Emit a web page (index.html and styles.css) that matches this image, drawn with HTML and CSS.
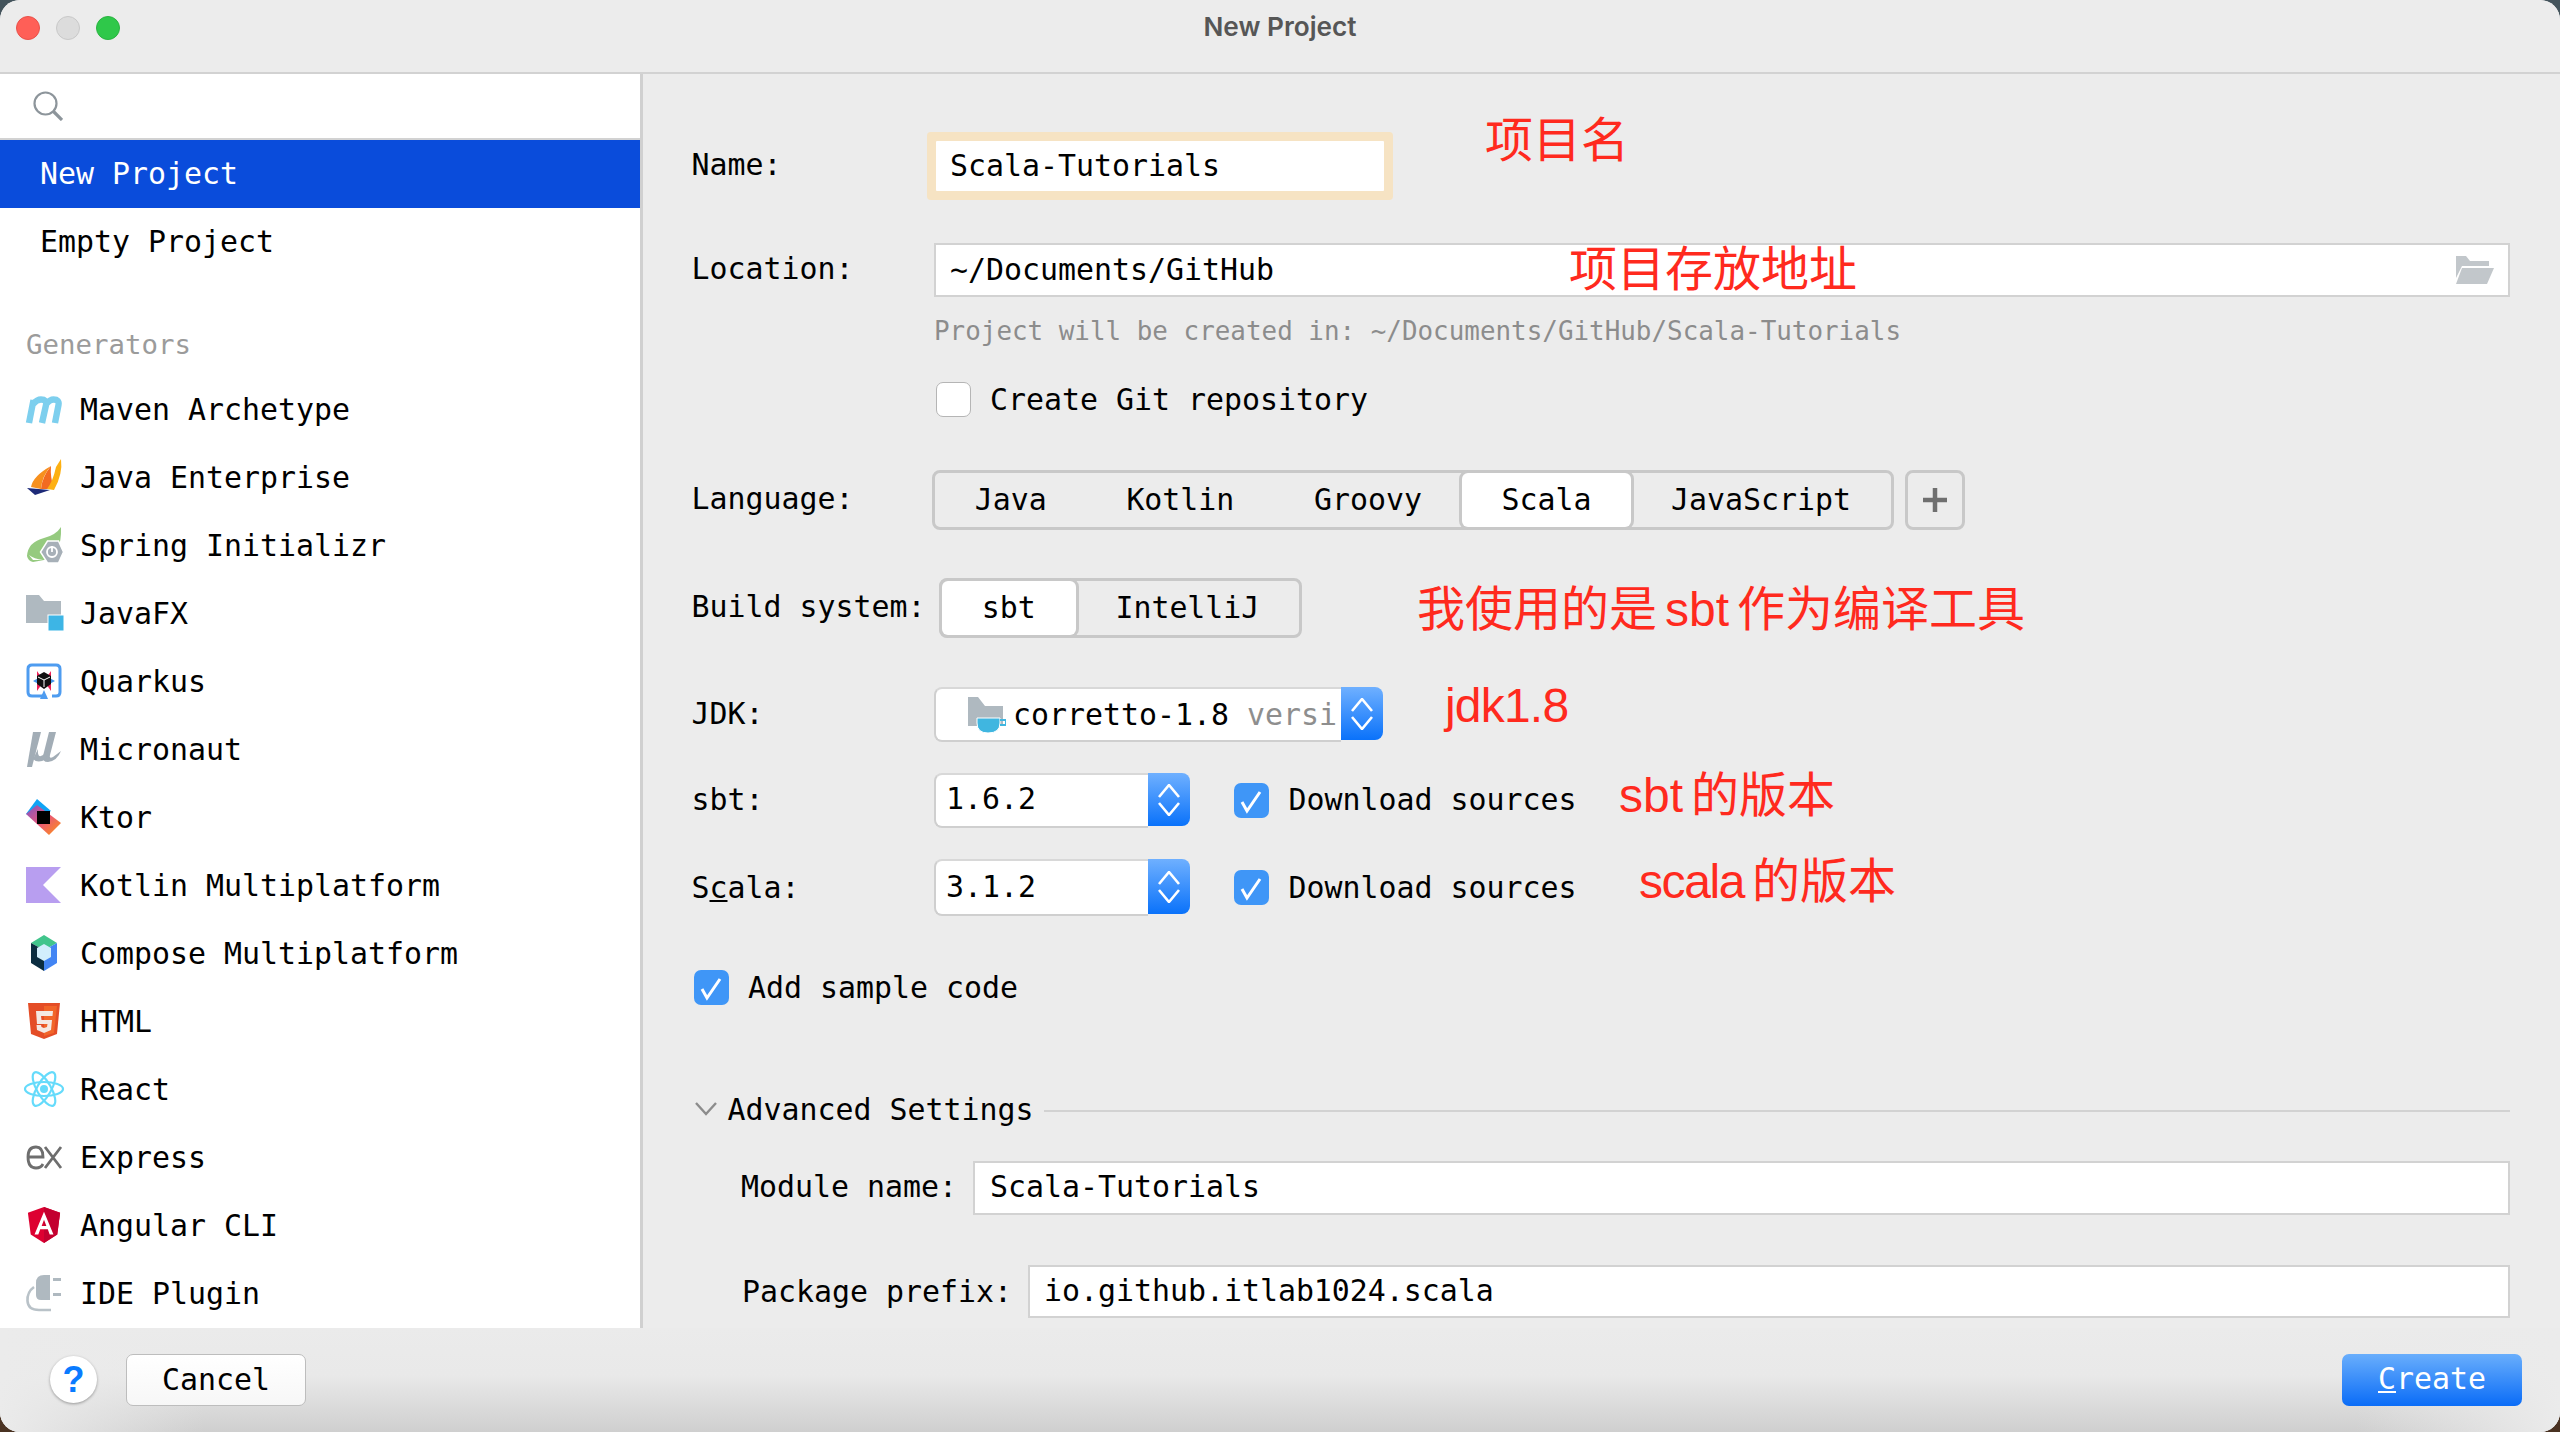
FILE: index.html
```html
<!DOCTYPE html>
<html lang="en">
<head>
<meta charset="utf-8">
<title>New Project</title>
<link rel="stylesheet" href="styles.css">
</head>
<body>
<div class="window">
  <header class="titlebar">
    <div class="lights">
      <span class="light light-red"></span>
      <span class="light light-grey"></span>
      <span class="light light-green"></span>
    </div>
    <h1 class="title">New Project</h1>
  </header>

  <main class="content">
    <aside class="sidebar">
      <div class="search">
        <svg class="search-icon" viewBox="0 0 30 30"><circle cx="12.5" cy="12.5" r="11" fill="none" stroke="#8d959b" stroke-width="2.2"/><path d="M20.5 20.5 L29 29" stroke="#8d959b" stroke-width="3.2" fill="none"/></svg>
      </div>
      <div class="top-item selected">New Project</div>
      <div class="top-item">Empty Project</div>
      <div class="group-title">Generators</div>

      <div class="gen"><svg class="ico" viewBox="0 0 36 36"><path d="M3 32 L7.5 9 M7 13 Q11 8.5 15 8.5 Q21 8.5 20 14 L16 32 M20 13 Q24 8.5 27.5 8.5 Q33.5 8.5 32.5 14 L29 32" fill="none" stroke="#7dcfee" stroke-width="6.4"/></svg><span>Maven Archetype</span></div>

      <div class="gen"><svg class="ico" viewBox="0 0 36 36"><path d="M5 28 Q7 17 25 7 Q16 17 15 30 Z" fill="#f7901e"/><path d="M15 30 Q16 18 25 7 Q24 18 28 30 Z" fill="#f26b21"/><path d="M35 0 Q37 15 28 31 L21 30 Q27 22 30 8 Z" fill="#fdb012"/><path d="M1 29 L24 31 L9 36 Z" fill="#1d2a78"/></svg><span>Java Enterprise</span></div>

      <div class="gen"><svg class="ico" viewBox="0 0 36 36"><path d="M35 0 Q30 8 18 11 Q2 15 1 29 Q2 34 7 35 L18 33 Q36 30 35 0 Z" fill="#95ca7f"/><path d="M17 33 L7 33 L3 28 Q8 32 17 33 Z" fill="#ffffff"/><path d="M22 14 L33 14 L38 25 L33 36 L22 36 L15 25 Z" transform="translate(-0.5 0)" fill="#a7b0b8" stroke="#fff" stroke-width="1.5"/><circle cx="26" cy="25" r="5" fill="none" stroke="#fff" stroke-width="1.8"/><path d="M26 19 V25" stroke="#fff" stroke-width="1.8"/></svg><span>Spring Initializr</span></div>

      <div class="gen"><svg class="ico" viewBox="0 0 36 36"><path d="M0 0 H13 L18 6 H35 V28 H0 Z" fill="#afb9c0"/><rect x="22" y="20" width="16" height="16" fill="#3db5e5" stroke="#fff" stroke-width="1"/></svg><span>JavaFX</span></div>

      <div class="gen"><svg class="ico" viewBox="0 0 36 36"><path d="M17 33 H6 Q2 33 2 29 V6 Q2 2 6 2 H30 Q34 2 34 6 V29 Q34 33 30 33 H26" fill="none" stroke="#4e9cf0" stroke-width="3"/><path d="M18 27 L22 36 H14 Z" fill="#4e9cf0"/><path d="M11 8 L18 18 L11 28 Z" fill="#ee1f57"/><path d="M25 8 L18 18 L25 28 Z" fill="#ee1f57"/><path d="M7 18 L18 12 L29 18 L18 24 Z" fill="#4695eb"/><path d="M18 9 L25 13 V21 L18 26 L11 21 V13 Z" fill="#111"/><path d="M12 14 L18 17 L24 14 M18 17 V24" stroke="#fff" stroke-width="1" fill="none"/></svg><span>Quarkus</span></div>

      <div class="gen"><svg class="ico" viewBox="0 0 36 36"><path d="M7 1 H15 L6 36 H1 Z" fill="#a2adb6"/><path d="M23 1 H30 L24 24 Q23 28 27 26 L35 20 Q31 30 22 31 Q16 31 17 25 Z" fill="#a2adb6"/><path d="M12 18 Q11 28 17 24 L22 20 L20 28 Q12 33 7 28 Z" fill="#a2adb6"/></svg><span>Micronaut</span></div>

      <div class="gen"><svg class="ico" viewBox="0 0 36 36"><defs><linearGradient id="kt1" x1="0" y1="0" x2="1" y2="1"><stop offset="0" stop-color="#7c55c8"/><stop offset="0.5" stop-color="#e8577a"/><stop offset="1" stop-color="#ff9410"/></linearGradient></defs><path d="M11 0 L0 15 L13 18 L25 12 Z" fill="#0fa4f5"/><path d="M0 15 L23 36 L35 24 L11 6 Z" fill="url(#kt1)"/><rect x="11" y="12" width="13" height="13" fill="#000"/></svg><span>Ktor</span></div>

      <div class="gen"><svg class="ico" viewBox="0 0 36 36"><path d="M0 0 H35 L17 18 L35 36 H0 Z" fill="#b89ef0"/></svg><span>Kotlin Multiplatform</span></div>

      <div class="gen"><svg class="ico" viewBox="0 0 36 36"><path d="M18 0 L31 8 L18 15 L5 8 Z" fill="#41c58c"/><path d="M5 8 L18 15 V36 L5 28 Z" fill="#0b2d40"/><path d="M31 8 L18 15 V36 L31 28 Z" fill="#4285f4"/><path d="M18 9 L25 13 V22 L18 26 L11 22 V13 Z" fill="#d2eefc"/></svg><span>Compose Multiplatform</span></div>

      <div class="gen"><svg class="ico" viewBox="0 0 36 36"><path d="M2 0 H34 L31 31 L18 36 L5 31 Z" fill="#e44d26"/><path d="M18 3 H31 L28 30 L18 33 Z" fill="#f16529"/><path d="M10 8 H27 L26.5 13 H15 L15.5 17 H26 L25 27 L18 30 L11 27 L10.5 22 H15 L15.5 24 L18 25 L21 24 L21.5 21 H11 Z" fill="#f4e8e2"/></svg><span>HTML</span></div>

      <div class="gen"><svg class="ico ico-wide" viewBox="0 0 40 36"><g fill="none" stroke="#65dbfb" stroke-width="2.2"><ellipse cx="20" cy="18" rx="19" ry="7"/><ellipse cx="20" cy="18" rx="19" ry="7" transform="rotate(60 20 18)"/><ellipse cx="20" cy="18" rx="19" ry="7" transform="rotate(120 20 18)"/></g><circle cx="20" cy="18" r="4" fill="#65dbfb"/></svg><span>React</span></div>

      <div class="gen"><svg class="ico" viewBox="0 0 36 36"><g fill="none" stroke="#6e6e6e" stroke-width="2.8"><path d="M2 18 H17 Q17 8 10 8 Q2 8 2 18 Q2 29 10 29 Q15 29 17 25"/><path d="M19 8 L35 29 M35 8 L19 29"/></g></svg><span>Express</span></div>

      <div class="gen"><svg class="ico" viewBox="0 0 36 38"><path d="M18 0 L35 6 L32 29 L18 38 L4 29 L1 6 Z" fill="#dd0031"/><path d="M18 0 L35 6 L32 29 L18 38 Z" fill="#c3002f"/><path d="M18 5 L28 29 H24 L22 23.5 H14 L12 29 H8 Z M15.5 20 H20.5 L18 13.5 Z" fill="#fff" fill-rule="evenodd"/></svg><span>Angular CLI</span></div>

      <div class="gen"><svg class="ico" viewBox="0 0 36 36"><path d="M10 8 Q10 0 18 0 H24 V25 H15 Q10 25 10 20 Z" fill="#afb9c0"/><path d="M27 3 H35 V6 H27 Z M27 18 H35 V21 H27 Z" fill="#afb9c0"/><path d="M8 12 Q1 17 1.5 26 Q2 35 13 35 H25" fill="none" stroke="#b9c2c8" stroke-width="2.6"/></svg><span>IDE Plugin</span></div>
    </aside>

    <section class="form">
      <div class="row row-name">
        <span class="label label-up">Name:</span>
        <div class="field field-focus">Scala-Tutorials</div>
      </div>
      <div class="row row-location">
        <span class="label label-up">Location:</span>
        <div class="field field-wide">
          <span class="grow">~/Documents/GitHub</span>
          <svg class="folder-open" viewBox="0 0 38 28"><path d="M0 0 H10 L14 5 H33 V10 H6 L0 22 Z" fill="#c2c7cb"/><path d="M6 12 H38 L31 28 H0 Z" fill="#c2c7cb"/></svg>
        </div>
      </div>
      <div class="hint">Project will be created in: ~/Documents/GitHub/Scala-Tutorials</div>
      <div class="row row-git">
        <span class="checkbox"></span>
        <span class="check-text">Create Git repository</span>
      </div>
      <div class="row row-lang">
        <span class="label label-up label-lang">Language:</span>
        <div class="segments">
          <span class="seg">Java</span>
          <span class="seg">Kotlin</span>
          <span class="seg">Groovy</span>
          <span class="seg seg-on">Scala</span>
          <span class="seg">JavaScript</span>
        </div>
        <div class="plus-btn"><svg viewBox="0 0 26 26" class="plus"><path d="M13 1 V25 M1 13 H25" stroke="#6f6f6f" stroke-width="4.5"/></svg></div>
      </div>
      <div class="row row-build">
        <span class="label label-up label-build">Build system:</span>
        <div class="segments">
          <span class="seg seg-on">sbt</span>
          <span class="seg">IntelliJ</span>
        </div>
      </div>
      <div class="row row-jdk">
        <span class="label label-up">JDK:</span>
        <div class="combo combo-jdk">
          <div class="combo-value">
            <svg class="jdk-icon" viewBox="0 0 38 36"><path d="M0 0 H10 L17 9 H35 V29 H0 Z" fill="#afb9c0"/><path d="M9 21 H32 V26 Q32 36 20 36 Q9 36 9 26 Z" fill="#40b6e0" stroke="#fff" stroke-width="1"/><path d="M32 23 H38 V28 H32" fill="none" stroke="#40b6e0" stroke-width="2"/></svg>
            <span>corretto-1.8</span><span class="muted">versi</span>
          </div>
          <div class="stepper"><svg class="arrows" viewBox="0 0 22 32"><path d="M1 13 L11 1 L21 13 M1 19 L11 31 L21 19" fill="none" stroke="#fff" stroke-width="2.6"/></svg></div>
        </div>
      </div>
      <div class="row row-sbt">
        <span class="label label-up">sbt:</span>
        <div class="combo combo-ver">
          <div class="combo-value combo-num">1.6.2</div>
          <div class="stepper"><svg class="arrows" viewBox="0 0 22 32"><path d="M1 13 L11 1 L21 13 M1 19 L11 31 L21 19" fill="none" stroke="#fff" stroke-width="2.6"/></svg></div>
        </div>
        <span class="checkbox checkbox-on"><svg viewBox="0 0 35 35"><path d="M8 19 L13 28 L26 9" fill="none" stroke="#fff" stroke-width="3"/></svg></span>
        <span class="check-text">Download sources</span>
      </div>
      <div class="row row-scala">
        <span class="label">S<u>c</u>ala:</span>
        <div class="combo combo-ver">
          <div class="combo-value combo-num">3.1.2</div>
          <div class="stepper"><svg class="arrows" viewBox="0 0 22 32"><path d="M1 13 L11 1 L21 13 M1 19 L11 31 L21 19" fill="none" stroke="#fff" stroke-width="2.6"/></svg></div>
        </div>
        <span class="checkbox checkbox-on"><svg viewBox="0 0 35 35"><path d="M8 19 L13 28 L26 9" fill="none" stroke="#fff" stroke-width="3"/></svg></span>
        <span class="check-text">Download sources</span>
      </div>
      <div class="row row-add">
        <span class="checkbox checkbox-on checkbox-first"><svg viewBox="0 0 35 35"><path d="M8 19 L13 28 L26 9" fill="none" stroke="#fff" stroke-width="3"/></svg></span>
        <span class="check-text">Add sample code</span>
      </div>
      <div class="row row-adv">
        <svg class="chevron" viewBox="0 0 22 14"><path d="M1 1 L11 12 L21 1" fill="none" stroke="#8c8c8c" stroke-width="2.4"/></svg>
        <span>Advanced Settings</span>
        <span class="rule"></span>
      </div>
      <div class="row row-module">
        <span class="sub-label label-up">Module name:</span>
        <div class="field field-grow">Scala-Tutorials</div>
      </div>
      <div class="row row-package">
        <span class="sub-label">Package prefix:</span>
        <div class="field field-grow">io.github.itlab1024.scala</div>
      </div>
    </section>
  </main>

  <footer class="footer">
    <div class="help">?</div>
    <div class="btn btn-cancel">Cancel</div>
    <div class="btn btn-create"><u>C</u>reate</div>
  </footer>

  <div class="note note-1">项目名</div>
  <div class="note note-2">项目存放地址</div>
  <div class="note note-3">我使用的是<span class="latin">sbt</span>作为编译工具</div>
  <div class="note note-4">jdk1.8</div>
  <div class="note note-5"><span class="latin latin-first">sbt</span>的版本</div>
  <div class="note note-6"><span class="latin latin-first latin-tight">scala</span>的版本</div>
</div>
</body>
</html>
```
FILE: styles.css
```css
* { box-sizing: border-box; }
html, body { margin: 0; height: 100%; }
body {
  width: 2560px;
  height: 1432px;
  overflow: hidden;
  background: linear-gradient(#44545c 0, #44545c 50%, #4a3222 50%, #4a3222 100%);
  font-family: "DejaVu Sans Mono", monospace;
  font-size: 29.9px;
  color: #000;
}
.window {
  position: relative;
  width: 2560px;
  height: 1432px;
  border-radius: 20px;
  overflow: hidden;
  display: flex;
  flex-direction: column;
  background: #ececec;
}

/* title bar */
.titlebar {
  height: 74px;
  flex: none;
  display: grid;
  grid-template-columns: 1fr auto 1fr;
  align-items: start;
  background: #ececec;
  border-bottom: 2px solid #d2d2d2;
}
.lights { display: flex; gap: 16px; padding: 16px 0 0 16px; }
.light { width: 24px; height: 24px; border-radius: 50%; }
.light-red { background: #ff5f57; border: 1px solid #e8514a; }
.light-grey { background: #dcdcdc; border: 1px solid #c8c8c8; }
.light-green { background: #2fc84a; border: 1px solid #2ab341; }
.title {
  margin: 9px 0 0;
  font: 600 26.2px/36px Inter, "Liberation Sans", sans-serif;
  color: #565656;
}

/* body */
.content { flex: none; height: 1254px; display: flex; }
.sidebar {
  width: 643px;
  flex: none;
  background: #fff;
  border-right: 3px solid #d0d0d0;
  overflow: hidden;
}
.search {
  height: 66px;
  border-bottom: 2px solid #d2d2d2;
  padding: 17px 0 0 33px;
}
.search-icon { display: block; width: 30px; height: 30px; }
.top-item {
  height: 68px;
  padding-left: 40px;
  line-height: 68px;
  white-space: pre;
}
.selected { background: #0a4cdb; color: #fff; }
.group-title {
  height: 99px;
  padding: 52px 0 0 26px;
  font-size: 27.4px;
  line-height: 34px;
  color: #9b9b9b;
}
.gen {
  height: 68px;
  display: flex;
  align-items: center;
  gap: 18px;
  padding-left: 26px;
  white-space: pre;
}
.ico { width: 36px; height: 36px; flex: none; display: block; overflow: visible; }
.ico-wide { width: 40px; margin: 0 -2px; }

/* form */
.form {
  flex: 1;
  min-width: 0;
  padding: 67px 50px 0;
  display: flex;
  flex-direction: column;
}
.row { display: flex; align-items: center; flex: none; white-space: pre; }
.label { width: 241px; flex: none; padding-left: 0; position: relative; left: -1.5px; }
.label-up { padding-bottom: 3px; }
.label-lang { width: 239px; }
.label-build { width: 246px; }
.field {
  height: 50px;
  background: #fff;
  padding-left: 14px;
  line-height: 46px;
  border: 2px solid #d2d2d2;
}
.field-focus {
  width: 448px;
  margin-left: 2px;
  height: 50px;
  border: 0;
  line-height: 50px;
  box-shadow: 0 0 0 9px #f6e3c3;
  border-radius: 1px;
}
.field-wide { flex: 1; height: 54px; display: flex; align-items: center; padding-right: 14px; }
.field-grow { flex: 1; height: 100%; line-height: 48px; padding-left: 14px; }
.row-module .field-grow { line-height: 47px; padding-left: 15px; }
.grow { flex: 1; }
.folder-open { width: 38px; height: 28px; display: block; }

.row-name { height: 50px; }
.row-location { height: 54px; margin-top: 52px; }
.hint {
  height: 30px;
  margin-top: 18px;
  padding: 1px 0 0 241px;
  font-size: 25.92px;
  line-height: 30px;
  color: #8c8c8c;
  white-space: pre;
}
.row-git { height: 35px; margin-top: 37px; padding-left: 243px; }
.row-lang { height: 60px; margin-top: 53px; }
.row-build { height: 60px; margin-top: 48px; }
.row-jdk { height: 55px; margin-top: 49px; }
.row-sbt { height: 55px; margin-top: 31px; }
.row-scala { height: 57px; margin-top: 31px; }
.row-add { height: 35px; margin-top: 54px; }
.row-adv { height: 30px; margin-top: 89px; }
.row-module { height: 54px; margin-top: 37px; padding-left: 48px; }
.row-package { height: 53px; margin-top: 50px; padding-left: 49px; }

.checkbox {
  width: 35px;
  height: 35px;
  flex: none;
  border-radius: 7px;
  background: #fff;
  border: 1px solid #b5b5b5;
}
.checkbox svg { display: block; width: 35px; height: 35px; }
.checkbox-on {
  background: #3f96f7;
  border: 0;
  margin-left: 44px;
}
.checkbox-first { margin-left: 1px; }
.check-text { margin-left: 19px; }
.row-sbt .check-text, .row-scala .check-text { margin-left: 19.5px; }
.row-sbt .check-text { padding-bottom: 3px; }

.segments {
  display: flex;
  height: 60px;
  background: #ececec;
  border: 3px solid #c8c8c8;
  border-radius: 8px;
}
.seg {
  padding: 0 39.8px;
  line-height: 53px;
}
.seg-on {
  background: #fff;
  border-radius: 6px;
  box-shadow: 0 0 0 3px #c8c8c8;
  position: relative;
}
.plus-btn {
  width: 60px;
  height: 60px;
  margin-left: 11px;
  border: 3px solid #c8c8c8;
  border-radius: 8px;
  display: flex;
  align-items: center;
  justify-content: center;
}
.plus { width: 26px; height: 26px; display: block; }

.combo { height: 100%; display: flex; }
.combo-jdk { width: 449px; }
.combo-ver { width: 256px; }
.combo-value {
  flex: 1;
  min-width: 0;
  display: flex;
  align-items: center;
  overflow: hidden;
  padding-left: 32px;
  background: #fff;
  border: 2px solid #cfcfcf;
  border-top-color: #d8d8d8;
  border-right: 0;
  border-radius: 8px 0 0 8px;
}
.combo-num { padding: 0 0 2px 10px; }
.row-sbt .combo-num { padding-bottom: 4px; }
.jdk-icon { width: 38px; height: 36px; flex: none; margin-right: 7px; display: block; }
.muted { color: #8e8e8e; margin-left: 18px; }
.stepper {
  width: 42px;
  flex: none;
  margin-bottom: 2px;
  border-radius: 0 8px 8px 0;
  background: linear-gradient(#6fb0ff, #0a72fa);
  display: flex;
  align-items: center;
  justify-content: center;
}
.arrows { width: 22px; height: 32px; display: block; }

.chevron { width: 22px; height: 14px; flex: none; margin: 0 11px 0 1.5px; display: block; }
.rule { flex: 1; height: 2px; background: #d2d2d2; margin: 4px 0 0 11px; }
.sub-label { margin-right: 16px; }

/* footer */
.footer {
  flex: 1;
  position: relative;
  display: flex;
  align-items: flex-start;
  padding: 26px 38px 0 50px;
  background:
    linear-gradient(90deg, #ebebeb 0, rgba(235,235,235,0) 8%, rgba(235,235,235,0) 92%, #ebebeb 100%),
    linear-gradient(#ebebeb 0, #e9e9e9 45%, #cfcfcf 100%);
}
.help {
  width: 47px;
  height: 47px;
  margin-top: 2px;
  border-radius: 50%;
  background: #fff;
  box-shadow: 0 1px 3px rgba(0,0,0,0.35);
  color: #0a7bff;
  font: 700 36px/47px "Liberation Sans", sans-serif;
  text-align: center;
}
.btn {
  width: 180px;
  height: 52px;
  border-radius: 7px;
  text-align: center;
  line-height: 50px;
}
.btn-cancel {
  margin-left: 29px;
  background: linear-gradient(#fff, #f7f7f7);
  border: 1px solid #bdbdbd;
}
.btn-create {
  margin-left: auto;
  background: linear-gradient(#69aefc, #0a6cf7);
  color: #fff;
}

/* red annotations lying over the dialog */
.note {
  position: absolute;
  font-family: "Liberation Sans", "Noto Sans CJK SC", sans-serif;
  font-size: 48px;
  line-height: 60px;
  color: #ff2a1e;
  white-space: pre;
}
.latin { margin: 0 8px; }
.latin-first { margin: 0 8px 0 0; }
.latin-tight { letter-spacing: -1.4px; }
.note-1 { left: 1485px; top: 111px; }
.note-2 { left: 1569px; top: 240px; }
.note-3 { left: 1417px; top: 580px; }
.note-4 { left: 1445px; top: 676px; letter-spacing: -0.8px; }
.note-5 { left: 1619px; top: 766px; }
.note-6 { left: 1639px; top: 852px; }
```
